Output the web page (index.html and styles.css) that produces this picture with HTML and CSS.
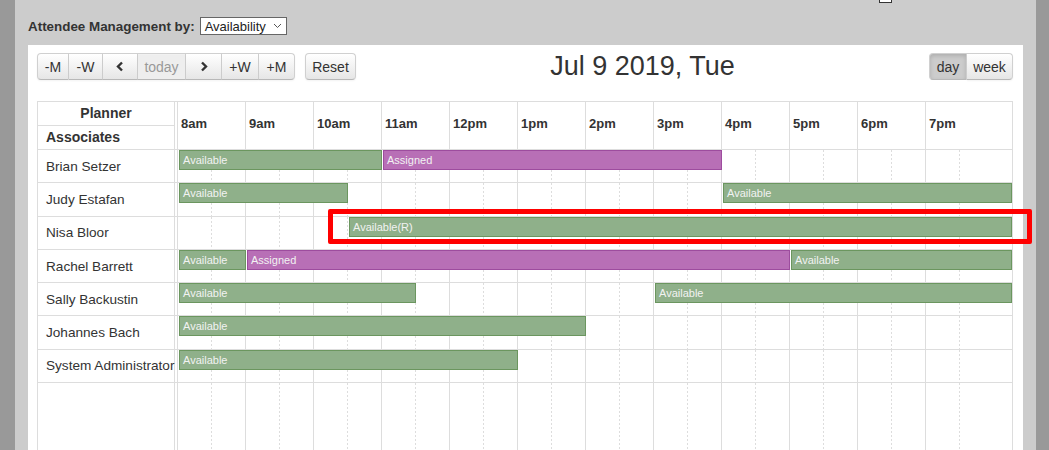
FILE: index.html
```html
<!DOCTYPE html>
<html lang="en">
<head>
    <meta charset="UTF-8" />
    <meta name="viewport" content="width=device-width, initial-scale=1.0" />
    <link rel="stylesheet" href="styles.css">
</head>
<body>
    <div class="page">
        <!-- Top filter bar -->
        <div class="topbar">
            <div class="filter">
                <span class="filter-label">Attendee Management by:</span>
                <span class="fake-select">
                    Availability
                    <svg width="9" height="6" viewBox="0 0 9 6"><polyline points="1,1 4.5,4.5 8,1" fill="none" stroke="#555" stroke-width="1"/></svg>
                </span>
            </div>
            <div class="stray-check"></div>
        </div>

        <div class="panel">
            <!-- Calendar toolbar -->
            <div class="toolbar">
                <div class="toolbar-left">
                    <div class="btn-group">
                        <button class="btn w32">-M</button>
                        <button class="btn w34">-W</button>
                        <button class="btn w35"><svg width="8" height="11" viewBox="0 0 8 11"><polyline points="6,1.5 2,5.5 6,9.5" fill="none" stroke="#333" stroke-width="2.4"/></svg></button>
                        <button class="btn btn-disabled w48">today</button>
                        <button class="btn w36"><svg width="8" height="11" viewBox="0 0 8 11"><polyline points="2,1.5 6,5.5 2,9.5" fill="none" stroke="#333" stroke-width="2.4"/></svg></button>
                        <button class="btn w37">+W</button>
                        <button class="btn w36">+M</button>
                    </div>
                    <button class="btn btn-single">Reset</button>
                </div>
                <h2 class="toolbar-title">Jul 9 2019, Tue</h2>
                <div class="btn-group">
                    <button class="btn btn-active">day</button>
                    <button class="btn w46">week</button>
                </div>
            </div>

            <!-- Planner grid -->
            <div class="sched" id="sched">
                <div class="sched-head">
                    <div class="name-col head-names">
                        <div class="head-title">Planner</div>
                        <div class="head-sub">Associates</div>
                    </div>
                    <div class="track" id="head-track"></div>
                </div>
                <div id="rows"></div>
                <div class="highlight-box"></div>
            </div>
        </div>
    </div>

    <script>
        var hours = ["8am", "9am", "10am", "11am", "12pm", "1pm", "2pm", "3pm", "4pm", "5pm", "6pm", "7pm"];
        var HOUR = 68;

        // bars: [start hour, end hour, label, kind]
        var people = [
            { name: "Brian Setzer", bars: [[8, 11, "Available", "free"], [11, 16, "Assigned", "busy"]] },
            { name: "Judy Estafan", bars: [[8, 10.5, "Available", "free"], [16, 20.3, "Available", "free"]] },
            { name: "Nisa Bloor", bars: [[10.5, 20.3, "Available(R)", "free"]] },
            { name: "Rachel Barrett", bars: [[8, 9, "Available", "free"], [9, 17, "Assigned", "busy"], [17, 20.3, "Available", "free"]] },
            { name: "Sally Backustin", bars: [[8, 11.5, "Available", "free"], [15, 20.3, "Available", "free"]] },
            { name: "Johannes Bach", bars: [[8, 14, "Available", "free"]] },
            { name: "System Administrator", bars: [[8, 13, "Available", "free"]] }
        ];

        function addSlots(track, withLabels) {
            hours.forEach(function (h) {
                var slot = document.createElement("div");
                slot.className = withLabels ? "slot slot-head" : "slot";
                if (withLabels) slot.textContent = h;
                track.appendChild(slot);
            });
        }

        addSlots(document.getElementById("head-track"), true);

        var rows = document.getElementById("rows");
        people.concat([null]).forEach(function (p) {
            var row = document.createElement("div");
            row.className = p ? "sched-row" : "sched-row filler";

            var name = document.createElement("div");
            name.className = "name-col";
            name.textContent = p ? p.name : "";
            row.appendChild(name);

            var track = document.createElement("div");
            track.className = "track";
            addSlots(track, false);

            if (p) {
                p.bars.forEach(function (b) {
                    var bar = document.createElement("div");
                    bar.className = "bar bar-" + b[3];
                    var left = 2 + (b[0] - 8) * HOUR;
                    var right = Math.min(835, 1 + (b[1] - 8) * HOUR);
                    bar.style.left = left + "px";
                    bar.style.width = (right - left) + "px";
                    bar.textContent = b[2];
                    track.appendChild(bar);
                });
            }
            row.appendChild(track);
            rows.appendChild(row);
        });
    </script>
</body>
</html>
```

FILE: styles.css
```css
body {
    margin: 0;
    background-color: #999999;
    font-family: "Liberation Sans", Arial, sans-serif;
    color: #333;
    overflow: hidden;
    height: 450px;
}
.page {
    margin: 0 13px 0 15px;
    padding: 0 13px;
    background-color: #cccccc;
    height: 450px;
}
/* Top filter bar */
.topbar {
    height: 45px;
    display: flex;
    align-items: flex-start;
}
.filter {
    margin-top: 17px;
    display: flex;
    align-items: center;
}
.filter-label {
    font-size: 13.4px;
    font-weight: bold;
    margin-right: 5px;
}
.fake-select {
    display: inline-flex;
    align-items: center;
    justify-content: space-between;
    width: 77px;
    height: 16px;
    padding: 0 4px 0 4px;
    border: 1px solid #666;
    background: #fff;
    font-size: 13px;
    color: #222;
}
.stray-check {
    margin-left: auto;
    margin-right: 131px;
    margin-top: -10px;
    width: 11px;
    height: 11px;
    border: 1px solid #333;
    background: #fff;
}
.panel {
    background: #fff;
    padding: 8px 10px 0 9px;
    height: 397px;
}
/* Toolbar */
.toolbar {
    display: flex;
    align-items: center;
    height: 27px;
}
.toolbar-left {
    display: flex;
}
.toolbar-title {
    flex: 1;
    margin: 0;
    text-align: center;
    font-size: 27px;
    font-weight: normal;
    color: #333;
    line-height: 27px;
}
.btn-group {
    display: flex;
}
.btn {
    box-sizing: border-box;
    height: 27px;
    padding: 0;
    font-family: "Liberation Sans", Arial, sans-serif;
    font-size: 14px;
    color: #333;
    background: linear-gradient(#ffffff, #e6e6e6);
    border: 1px solid #d0d0d0;
    border-bottom-color: #b8b8b8;
    border-left-width: 0;
    box-shadow: inset 0 1px 0 rgba(255, 255, 255, 0.2), 0 1px 2px rgba(0, 0, 0, 0.05);
    display: flex;
    align-items: center;
    justify-content: center;
}
.btn-group .btn:first-child {
    border-left-width: 1px;
    border-radius: 4px 0 0 4px;
}
.btn-group .btn:last-child {
    border-radius: 0 4px 4px 0;
}
.w32 { width: 32px; }
.w34 { width: 34px; }
.w35 { width: 35px; }
.w36 { width: 36px; }
.w37 { width: 37px; }
.w46 { width: 46px; }
.w48 { width: 48px; }
.btn-disabled {
    color: #999;
    background: #eeeeee;
}
.btn-single {
    margin-left: 10px;
    border-left-width: 1px;
    border-radius: 4px;
    width: 51px;
}
.btn-active {
    background: #cccccc;
    box-shadow: inset 0 2px 4px rgba(0, 0, 0, 0.15);
    width: 38px;
}
/* Planner grid */
.sched {
    position: relative;
    margin-top: 21px;
    border-top: 1px solid #ddd;
    border-left: 1px solid #ddd;
}
.sched-head,
.sched-row {
    display: flex;
    border-bottom: 1px solid #ddd;
}
.sched-head {
    height: 47px;
}
.sched-row {
    height: 32.3px;
}
.sched-row.filler {
    height: 67px;
    border-bottom: none;
}
.name-col {
    width: 137px;
    flex-shrink: 0;
    border-right: 1px solid #ddd;
    margin-right: 2px;
    box-sizing: border-box;
    padding-left: 8px;
    font-size: 13.6px;
    white-space: nowrap;
    display: flex;
    align-items: center;
}
.head-names {
    flex-direction: column;
    align-items: stretch;
    padding-left: 0;
    font-weight: bold;
    font-size: 14px;
}
.head-title {
    height: 23px;
    border-bottom: 1px solid #ddd;
    text-align: center;
    line-height: 23px;
}
.head-sub {
    flex: 1;
    padding-left: 8px;
    line-height: 23px;
}
.track {
    position: relative;
    display: flex;
    width: 837px;
    border-right: 1px solid #ddd;
    box-sizing: border-box;
}
.slot {
    width: 68px;
    flex-shrink: 0;
    box-sizing: border-box;
    border-left: 1px solid #ddd;
    background-image: linear-gradient(#dddddd 50%, transparent 50%);
    background-size: 1px 4px;
    background-repeat: repeat-y;
    background-position: 33px 0;
}
.slot:last-child {
    flex: 1;
}
.slot-head {
    background-image: none;
    font-size: 13px;
    font-weight: bold;
    padding-left: 3px;
    padding-bottom: 4px;
    display: flex;
    align-items: center;
}
.bar {
    position: absolute;
    top: 0;
    height: 20px;
    box-sizing: border-box;
    padding-left: 3px;
    font-size: 11px;
    line-height: 18px;
    color: #f2f2f2;
    white-space: nowrap;
    overflow: hidden;
}
.bar-free {
    background-color: #8fb08a;
    border: 1px solid #6b965f;
}
.bar-busy {
    background-color: #b86fb6;
    border: 1px solid #9d4c9e;
}
.highlight-box {
    position: absolute;
    left: 290px;
    top: 107px;
    width: 704px;
    height: 35px;
    box-sizing: border-box;
    border: 5px solid #ff0000;
    border-radius: 2px;
}
```
